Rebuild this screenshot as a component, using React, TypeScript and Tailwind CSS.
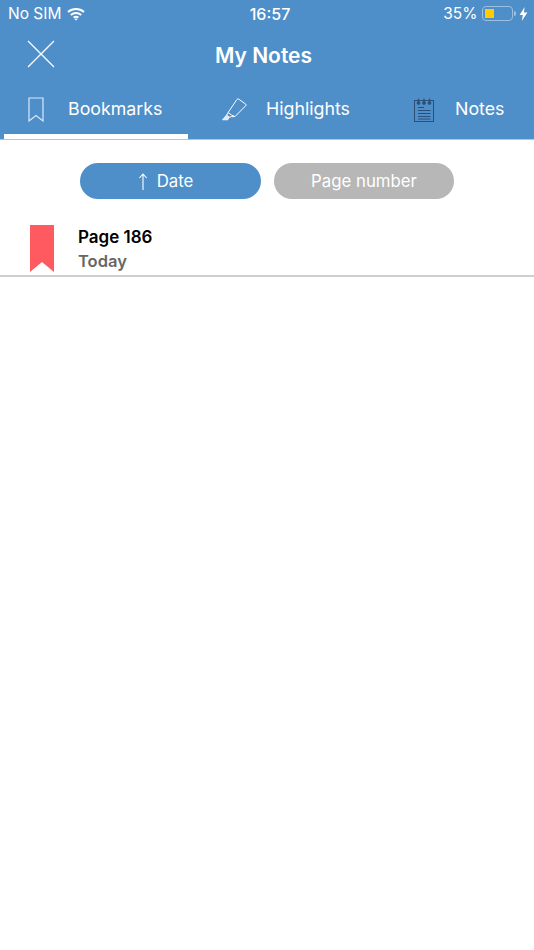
import React from "react";

const font = { fontFamily: "Inter, 'Noto Sans', sans-serif" };

function WifiIcon() {
  return (
    <svg width="18" height="14" viewBox="0 0 18 14" fill="none" stroke="white" strokeWidth="2">
      <path d="M1 5 C5.5 1, 12.5 1, 17 5" />
      <path d="M3.8 8 C6.8 5.4, 11.2 5.4, 14.2 8" />
      <path d="M6.6 10.6 C8 9.6, 10 9.6, 11.4 10.6" />
      <path d="M9 13.6 L7.4 12 Q9 11 10.6 12 Z" fill="white" stroke="none" />
    </svg>
  );
}

function Battery() {
  return (
    <div className="flex items-center">
      <div className="flex h-[15px] w-[31px] items-center rounded-[4px] border border-[#9dc0e2] px-[2px]">
        <div className="h-[9px] w-[9px] bg-[#ffcc00]" />
      </div>
      <div className="ml-[1px] h-[5px] w-[1.5px] rounded-r bg-[#9dc0e2]" />
    </div>
  );
}

function BoltIcon() {
  return (
    <svg width="9" height="14" viewBox="0 0 9 14" fill="white">
      <path d="M5.6 0 L0.6 8 L3.8 8 L2.8 14 L8.4 5.4 L5 5.4 Z" />
    </svg>
  );
}

function CloseIcon() {
  return (
    <svg width="28" height="28" viewBox="0 0 28 28" stroke="white" strokeWidth="1.3" fill="none">
      <path d="M1 1 L27 27 M27 1 L1 27" />
    </svg>
  );
}

function BookmarkIcon() {
  return (
    <svg width="16" height="25" viewBox="0 0 16 25" fill="none" stroke="#dbe8f5" strokeWidth="1.2">
      <path d="M1 1 H15 V24 L8 18.5 L1 24 Z" />
    </svg>
  );
}

function HighlighterIcon() {
  return (
    <svg width="26" height="23" viewBox="0 0 26 23" fill="none" stroke="white" strokeWidth="1" strokeLinejoin="round">
      <path d="M17.5 1 L24.6 6 Q25.4 6.8 24.8 7.6 L14 18.6 Q11 17.6 7 14.6 L16 1.4 Q16.8 0.6 17.5 1 Z" />
      <path d="M7 14.6 Q6.6 16 5.6 17 L8.2 19.2 Q10.6 18.4 14 18.6" />
      <path d="M5.6 17 L1.5 21.8 H6.8 L8.2 19.2" fill="#dbe8f5" strokeWidth="0.8" />
    </svg>
  );
}

function NotepadIcon() {
  return (
    <svg width="20" height="24" viewBox="0 0 20 24" fill="none" stroke="#2b4f78" strokeWidth="1">
      <rect x="0.5" y="2.5" width="19" height="21" />
      <path d="M4.5 0.5 V5 M10 0.5 V5 M15.5 0.5 V5" strokeWidth="1.2" />
      <circle cx="4.5" cy="5" r="1.4" fill="#2b4f78" />
      <circle cx="10" cy="5" r="1.4" fill="#2b4f78" />
      <circle cx="15.5" cy="5" r="1.4" fill="#2b4f78" />
      <path d="M4 9.5 H10 M4 12.5 H16.5 M4 15.5 H16.5 M4 18.5 H16.5 M4 21 H16.5" />
    </svg>
  );
}

function UpArrowIcon() {
  return (
    <svg width="10" height="18" viewBox="0 0 10 18" fill="none" stroke="white" strokeWidth="1.1">
      <path d="M5 17 V1 M1.4 5 L5 1 L8.6 5" />
    </svg>
  );
}

function RibbonIcon() {
  return (
    <svg width="24" height="47" viewBox="0 0 24 47" className="block">
      <path d="M0 0 H24 V47 L12 37 L0 47 Z" fill="#ff5a5f" />
    </svg>
  );
}

export default function App() {
  return (
    <main className="min-h-screen w-[534px] bg-white" style={font}>
      <header className="h-[140px] border-b border-[#a9c8e6] bg-[#4e8fc9] text-white">
        <div className="flex h-[27px] items-center justify-between pl-[8px] pr-[6px] text-[15.5px]">
          <div className="flex w-[180px] items-center gap-[6px]">
            <span>No SIM</span>
            <WifiIcon />
          </div>
          <span className="text-[16px] font-medium">16:57</span>
          <div className="flex w-[176px] items-center justify-end">
            <span className="mr-[5px]">35%</span>
            <Battery />
            <span className="ml-[3px]">
              <BoltIcon />
            </span>
          </div>
        </div>

        <div className="relative flex h-[58px] items-center justify-center pr-[7px]">
          <button className="absolute left-[27px] top-[13px]">
            <CloseIcon />
          </button>
          <h1 className="text-[21px] font-semibold">My Notes</h1>
        </div>

        <nav className="flex h-[54px] text-[17.8px]">
          <div className="ml-[4px] flex w-[184px] items-center gap-[24px] border-b-[5px] border-white pl-[24px]">
            <BookmarkIcon />
            <span>Bookmarks</span>
          </div>
          <div className="ml-[33px] flex items-center gap-[19px] border-b-[5px] border-transparent">
            <HighlighterIcon />
            <span>Highlights</span>
          </div>
          <div className="ml-[64px] flex items-center gap-[21px] border-b-[5px] border-transparent">
            <NotepadIcon />
            <span>Notes</span>
          </div>
        </nav>
      </header>

      <div className="flex justify-center gap-[13px] pt-[23px]">
        <button className="flex h-[36px] w-[181px] items-center justify-center gap-[9px] rounded-full bg-[#4e8fc9] pr-[10px] pt-[2px] text-[16.8px] text-white">
          <UpArrowIcon />
          <span>Date</span>
        </button>
        <button className="flex h-[36px] w-[180px] items-center justify-center rounded-full bg-[#b7b7b7] pt-[1px] text-[16.8px] text-white">
          Page number
        </button>
      </div>

      <div className="mt-[26px] flex h-[52px] border-b-2 border-[#cfcfcf] pl-[30px]">
        <RibbonIcon />
        <div className="ml-[24px] flex flex-col pt-[1px]">
          <span className="text-[17px] font-semibold leading-[22px] text-black">Page 186</span>
          <span className="mt-[2px] text-[16.5px] font-semibold leading-[22px] text-[#666666]">Today</span>
        </div>
      </div>
    </main>
  );
}
